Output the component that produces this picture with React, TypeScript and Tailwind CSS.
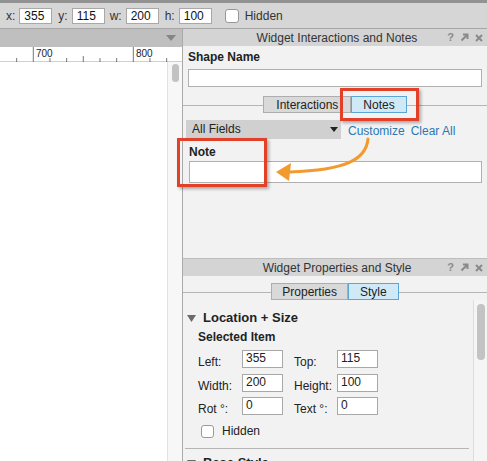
import React from "react";

const FONT = "font-['Liberation_Sans',Arial,sans-serif]";

const SmallInput = ({ value, w = "w-[33px]" }: { value: string; w?: string }) => (
  <div className={`${w} h-[16px] bg-white border border-[#a8a8a8] flex items-center px-[4px] text-[12px] text-[#111]`}>
    {value}
  </div>
);

const PanelHeader = ({ title }: { title: string }) => (
  <div className="h-[17px] shrink-0 bg-[#d4d4d4] relative flex items-center justify-center text-[12px] text-[#333]">
    <span className="pl-[4px]">{title}</span>
    <div className="absolute right-[4px] top-0 h-full flex items-center gap-[6px] text-[#8a8a8a] text-[11px] font-bold">
      <span>?</span>
      <svg width="9" height="9" viewBox="0 0 9 9">
        <path d="M1.5 7.5 L7 2 M3 1.5 H7.5 V6" stroke="#8a8a8a" strokeWidth="2" fill="none" />
      </svg>
      <svg width="8" height="8" viewBox="0 0 8 8">
        <path d="M1 1 L7 7 M7 1 L1 7" stroke="#8a8a8a" strokeWidth="2" />
      </svg>
    </div>
  </div>
);

const Tabs = ({ left, right, padLeft }: { left: string; right: string; padLeft: string }) => (
  <div className="relative flex justify-center">
    <div className="absolute left-0 right-0 top-1/2 h-px bg-[#b5b5b5]" />
    <div className="relative flex">
      <div className={`h-[17px] ${padLeft} bg-[#d9d9d9] border border-[#adadad] flex items-center text-[12px] text-[#222]`}>
        {left}
      </div>
      <div className="h-[17px] px-[11px] bg-[#cfe9f6] border border-[#5aa6d4] flex items-center text-[12px] text-[#222]">
        {right}
      </div>
    </div>
  </div>
);

const Ruler = () => {
  const ticks = [];
  for (let i = 0; i < 12; i++) {
    const x = 33.3 + (i - 2) * 16.67;
    if (x < 0 || x > 182) continue;
    const major = i % 6 === 2;
    const mid = i % 6 === 5;
    ticks.push(
      <line key={i} x1={x} x2={x} y1={major ? 0 : mid ? 9 : 11} y2={15} stroke="#555" strokeWidth="0.8" />
    );
  }
  return (
    <div className="h-[15px] bg-white relative border-b border-[#d0d0d0]">
      <svg width="182" height="15" className="absolute inset-0">
        {ticks}
      </svg>
      <span className="absolute left-[36px] top-[-1px] text-[10px] text-[#222]">700</span>
      <span className="absolute left-[136px] top-[-1px] text-[10px] text-[#222]">800</span>
    </div>
  );
};

const FieldRow = ({ l1, v1, l2, v2 }: { l1: string; v1: string; l2: string; v2: string }) => (
  <div className="flex items-center h-[18px] mt-[6px]">
    <span className="w-[44px] mt-[5px]">{l1}</span>
    <div className="w-[41px] h-[18px] bg-white border border-[#a8a8a8] px-[3px] text-[12px] leading-[15px]">{v1}</div>
    <span className="w-[43px] ml-[11px] mt-[5px]">{l2}</span>
    <div className="w-[41px] h-[18px] bg-white border border-[#a8a8a8] px-[3px] text-[12px] leading-[15px]">{v2}</div>
  </div>
);

export default function App() {
  return (
    <div className={`w-[487px] h-[461px] overflow-hidden flex flex-col bg-[#f2f2f2] text-[12px] text-[#222] relative ${FONT}`}>
      {/* toolbar */}
      <div className="h-[29px] shrink-0 border-t-[3px] border-[#929292] border-b border-b-[#a6a6a6] bg-[#d6d6d6] flex items-center pl-[6px] text-[12px] text-[#333]">
        <span className="mr-[4px]">x:</span>
        <SmallInput value="355" />
        <span className="ml-[6px] mr-[4px]">y:</span>
        <SmallInput value="115" />
        <span className="ml-[5px] mr-[4px]">w:</span>
        <SmallInput value="200" />
        <span className="ml-[6px] mr-[4px]">h:</span>
        <SmallInput value="100" />
        <div className="ml-[13px] w-[14px] h-[14px] rounded-[3px] bg-white border border-[#999]" />
        <span className="ml-[6px]">Hidden</span>
      </div>

      <div className="flex flex-1 min-h-0">
        {/* canvas */}
        <div className="w-[182px] shrink-0 flex flex-col bg-white">
          <div className="h-[18px] shrink-0 bg-[#bfbfbf] flex items-center justify-end pr-[6px]">
            <svg width="10" height="6" viewBox="0 0 10 6">
              <path d="M0 0 H10 L5 6 Z" fill="#858585" />
            </svg>
          </div>
          <Ruler />
          <div className="flex flex-1">
            <div className="flex-1 bg-white" />
            <div className="w-[15px] bg-[#f7f7f7] border-l border-[#e2e2e2] pt-[2px] flex justify-center">
              <div className="w-[7px] h-[18px] rounded-full bg-[#c2c2c2]" />
            </div>
          </div>
        </div>

        {/* panels */}
        <div className="flex-1 flex flex-col border-l border-[#a9a9a9]">
          <div className="h-[230px] shrink-0 flex flex-col border-b border-[#bdbdbd]">
            <PanelHeader title="Widget Interactions and Notes" />
            <div className="flex-1 bg-[#f2f2f2] px-[5px] pt-[4px]">
              <div className="font-bold leading-[14px]">Shape Name</div>
              <div className="h-[18px] mt-[5px] bg-white border border-[#b0b0b0]" />
              <div className="mt-[9px] -mx-[5px]">
                <Tabs left="Interactions" right="Notes" padLeft="px-[12px]" />
              </div>
              <div className="flex items-center mt-[5px] -ml-[2px]">
                <div className="w-[155px] h-[19px] bg-[#d0d0d0] flex items-center justify-between pl-[6px] pr-[3px]">
                  <span>All Fields</span>
                  <svg width="8" height="5" viewBox="0 0 8 5">
                    <path d="M0 0 H8 L4 5 Z" fill="#222" />
                  </svg>
                </div>
                <span className="ml-[7px] mt-[4px] text-[#2a78b5]">Customize</span>
                <span className="ml-[6px] mt-[4px] text-[#2a78b5]">Clear All</span>
              </div>
              <div className="font-bold leading-[14px] mt-[5px] ml-[1px]">Note</div>
              <div className="h-[22px] mt-[2px] ml-[1px] bg-white border border-[#b0b0b0]" />
            </div>
          </div>

          <div className="flex-1 flex flex-col min-h-0">
            <PanelHeader title="Widget Properties and Style" />
            <div className="pt-[7px]">
              <Tabs left="Properties" right="Style" padLeft="px-[10px]" />
            </div>
            <div className="flex flex-1 min-h-0">
              <div className="flex-1 pl-[4px] pt-[10px]">
                <div className="flex items-center">
                  <svg width="9" height="7" viewBox="0 0 9 7">
                    <path d="M0 0 H9 L4.5 7 Z" fill="#6a6a6a" />
                  </svg>
                  <span className="ml-[7px] font-bold text-[13px] leading-[16px]">Location + Size</span>
                </div>
                <div className="pl-[11px]">
                  <div className="font-bold mt-[4px] leading-[14px]">Selected Item</div>
                  <div className="mt-[2px]">
                    <FieldRow l1="Left:" v1="355" l2="Top:" v2="115" />
                  </div>
                  <FieldRow l1="Width:" v1="200" l2="Height:" v2="100" />
                  <div className="-mt-[1px]">
                    <FieldRow l1="Rot °:" v1="0" l2="Text °:" v2="0" />
                  </div>
                  <div className="flex items-center mt-[8px] ml-[3px] h-[16px]">
                    <div className="w-[13px] h-[13px] rounded-[3px] bg-white border border-[#9a9a9a]" />
                    <span className="ml-[8px]">Hidden</span>
                  </div>
                </div>
                <div className="h-px bg-[#b5b5b5] mt-[9px] mr-[4px] -ml-[2px]" />
                <div className="flex items-center mt-[6px]">
                  <svg width="9" height="7" viewBox="0 0 9 7">
                    <path d="M0 0 H9 L4.5 7 Z" fill="#6a6a6a" />
                  </svg>
                  <span className="ml-[7px] font-bold text-[13px] leading-[16px]">Base Style</span>
                </div>
              </div>
              <div className="w-[14px] shrink-0 border-l border-[#dcdcdc] bg-[#f5f5f5] pt-[4px] flex justify-center">
                <div className="w-[8px] h-[56px] rounded-full bg-[#c3c3c3]" />
              </div>
            </div>
          </div>
        </div>
      </div>

      {/* annotations */}
      <div className="absolute left-[340px] top-[88px] w-[79px] h-[33px] border-[3px] border-[#e3402a] shadow-[2px_2px_3px_rgba(0,0,0,0.3)]" />
      <div className="absolute left-[177px] top-[138px] w-[90px] h-[49px] border-[3px] border-[#e3402a] shadow-[2px_2px_3px_rgba(0,0,0,0.3)]" />
      <svg className="absolute left-0 top-0 pointer-events-none" width="487" height="461">
        <path
          d="M368 139 C 366 160, 345 170, 290 172"
          stroke="#f29a2e"
          strokeWidth="3"
          fill="none"
          strokeLinecap="round"
        />
        <path d="M276 172 L291 163 L289 181 Z" fill="#f29a2e" />
      </svg>
    </div>
  );
}
